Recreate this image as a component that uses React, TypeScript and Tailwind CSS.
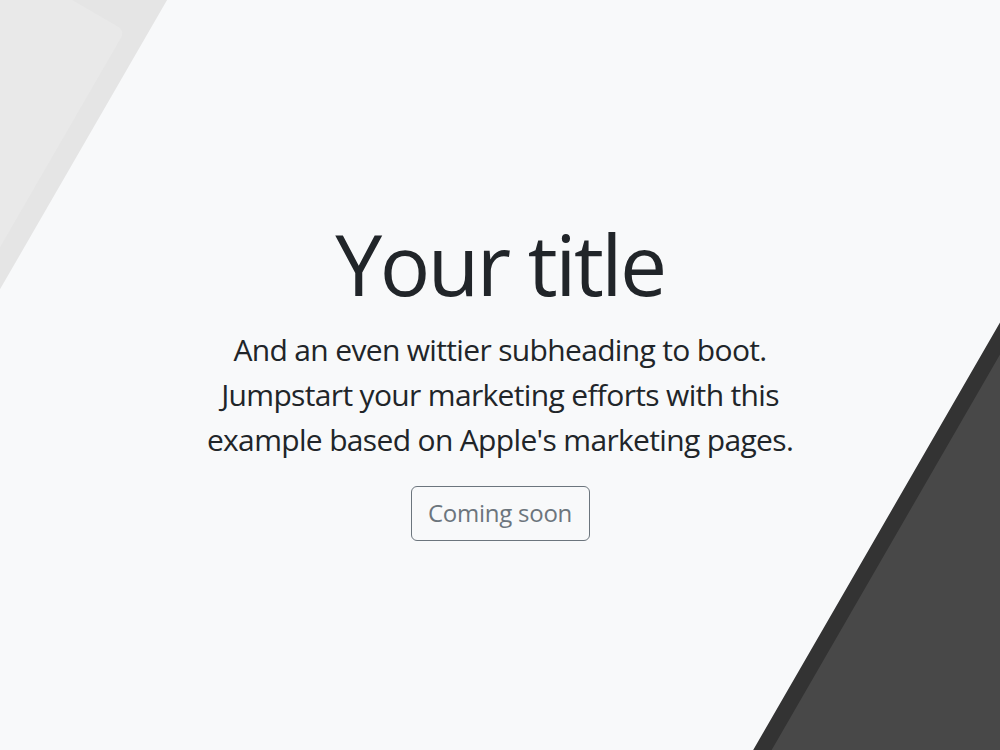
export default function App() {
  return (
    <div className="relative h-[750px] w-full overflow-hidden bg-[#f8f9fa] font-['Open_Sans','Noto_Sans',sans-serif] text-[#212529]">
      {/* light device, top left */}
      <div className="absolute left-[-723px] top-[-278px] h-[1400px] w-[600px] rotate-30 rounded-[30px] bg-[#e5e5e5]">
        <div className="absolute top-[87px] right-[21px] bottom-[80px] left-[40px] rounded-[8px] bg-[#e9e9e9]" />
      </div>

      {/* dark device, bottom right */}
      <div className="absolute left-[713px] top-[200px] h-[1400px] w-[600px] rotate-30 rounded-[30px] bg-[#333333]">
        <div className="absolute top-[80px] right-[60px] bottom-[80px] left-[16px] rounded-[8px] bg-[#484848]" />
      </div>

      <div className="relative z-10 flex flex-col items-center pt-[214px] text-center">
        <h1 className="mb-[12px] text-[84px] leading-[1.2] font-normal tracking-[-0.03em]">Your title</h1>
        <p className="mb-[24px] text-[30px] leading-[45px] font-normal tracking-[-0.022em]">
          And an even wittier subheading to boot.
          <br />
          Jumpstart your marketing efforts with this
          <br />
          example based on Apple's marketing pages.
        </p>
        <a
          href="#"
          className="flex h-[55px] w-[179px] items-center justify-center rounded-[6px] border border-[#6c757d] text-[24px] tracking-[-0.01em] text-[#6c757d]"
        >
          Coming soon
        </a>
      </div>
    </div>
  );
}
